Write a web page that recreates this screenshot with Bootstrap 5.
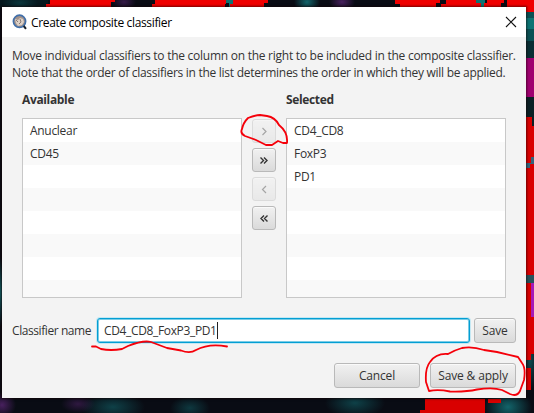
<!DOCTYPE html>
<html lang="en">
<head>
<meta charset="utf-8">
<title>Create composite classifier</title>
<meta name="viewport" content="width=device-width, initial-scale=1">
<link href="https://cdn.jsdelivr.net/npm/bootstrap@5.3.0/dist/css/bootstrap.min.css" rel="stylesheet">
<style>
  body { width: 534px; height: 413px; background: #090c14; font: 12px/17px "Open Sans", "Noto Sans", sans-serif; color: #333; }
  .backdrop-art, .annotations { left: 0; top: 0; }
  .annotations { pointer-events: none; z-index: 3; }
  .dialog-window { width: 524px; height: 391px; margin: 7px 0 0 2px; background: #f3f3f3; z-index: 1; box-shadow: 0 0 2px 1px rgba(20,0,0,.55); }
  .title-strip { height: 30px; padding: 0 9px 0 8px; color: #000; }
  .title-text { margin-left: 4px; letter-spacing: -.35px; }
  .intro { padding: 10px 0 0 10px; white-space: nowrap; }
  .intro-a { letter-spacing: -.26px; }
  .intro-b { letter-spacing: -.28px; }
  .lists { padding: 10px 20px 0; }
  .list-col { width: 220px; }
  .list-heading { height: 19px; font-weight: 700; letter-spacing: -.35px; margin-bottom: 8px; }
  .pick-list { height: 180px; border: 1px solid #c8c8c8; overflow: hidden; background: repeating-linear-gradient(#fff 0 23px, #f9f9f9 23px 46px); }
  .pick-list .list-group-item { height: 23px; padding: 3px 7px; background: none; color: #333; line-height: 17px; letter-spacing: -.3px; }
  .movers { width: 44px; padding-top: 28px; gap: 5px; }
  .fx-btn { --bs-btn-padding-x: 0; --bs-btn-padding-y: 0; --bs-btn-font-size: 12px; --bs-btn-line-height: 17px; --bs-btn-color: #333; --bs-btn-border-radius: 3px; --bs-btn-border-color: #b9b9b9; --bs-btn-disabled-color: #333; --bs-btn-disabled-border-color: #b9b9b9; --bs-btn-disabled-opacity: .4; height: 25px; background: linear-gradient(#f1f1f1, #dadada); box-shadow: inset 0 1px #fafafa; letter-spacing: -.15px; }
  .mover { width: 24px; height: 24px; }
  .name-row { padding: 20px 10px 0; }
  .name-label { width: 85px; letter-spacing: -.42px; white-space: nowrap; }
  .name-input { width: 373px; height: 25px; padding: 0 6px; border: 1px solid #039ed3; border-radius: 3px; font-size: 12px; color: #333; letter-spacing: -.35px; box-shadow: 0 0 0 1px #c5e8f3, inset 0 0 0 1px #7accE6; }
  .caret { width: 1px; height: 17px; background: #222; }
  .actions { padding: 20px 10px 0; gap: 10px; }
  .wide-btn { width: 86px; }
</style>
</head>
<body class="position-relative overflow-hidden m-0">
<svg class="backdrop-art position-absolute" width="534" height="413" viewBox="0 0 534 413" aria-hidden="true" shape-rendering="crispEdges">
  <defs>
    <radialGradient id="teal"><stop stop-color="#12646a"/><stop offset="1" stop-color="#12646a" stop-opacity="0"/></radialGradient>
    <radialGradient id="violet"><stop stop-color="#48205e"/><stop offset="1" stop-color="#48205e" stop-opacity="0"/></radialGradient>
  </defs>
  <path fill="#06181e" d="M0 0h48v8H0z"/>
  <g fill="url(#teal)">
    <ellipse cx="307" cy="2" rx="13" ry="12"/><ellipse cx="20" cy="3" rx="18" ry="8" opacity=".4"/>
    <ellipse cx="0" cy="292" rx="5" ry="35"/>
    <ellipse cx="113" cy="407" rx="32" ry="15" opacity=".6"/><ellipse cx="190" cy="408" rx="20" ry="12" opacity=".5"/>
    <ellipse cx="355" cy="403" rx="30" ry="15" opacity=".6"/><ellipse cx="508" cy="407" rx="24" ry="18"/>
    <ellipse cx="530" cy="360" rx="9" ry="30" opacity=".7"/>
  </g>
  <g fill="url(#violet)">
    <ellipse cx="124" cy="2" rx="12" ry="8" opacity=".7"/><ellipse cx="342" cy="2" rx="13" ry="9"/>
    <ellipse cx="2" cy="405" rx="14" ry="13"/><ellipse cx="78" cy="404" rx="17" ry="9" opacity=".6"/>
  </g>
  <path fill="#0c7372" d="M226 0h7v7h-4V3h-3zM476 0h9v7h-4V3h-5z"/>
  <path fill="#f00000" d="M50 0h65v2h-4v5H46V4h4zM155 0h71v4h-1v3h-73V4h3zM233 0h35v3h-4v4h-34V4h3zM395 0h45v3h-4v4h-36V4h-5zM446 0h30v3h5v4h-40V4h5zM487 0h17v3h-3v4h-17V3h3zM507 0h27v12h-8V7h-19z"/>
  <path fill="#0b5054" d="M526 12h8v46h-8z"/>
  <path fill="#0d7474" d="M526 18h8v11h-8z"/>
  <path fill="#092e34" d="M526 41h8v17h-8z"/>
  <path fill="#a00070" d="M526 58h8v39h-8z"/>
  <path fill="#0b2025" d="M526 97h8v29h-8z"/>
  <path fill="#d90000" d="M526 117h6v9h2v149h-8z"/>
  <path fill="#35647c" d="M526 163h5v-6h3v7h-4v4h-4z"/>
  <path fill="#26525a" d="M526 275h8v8h-8z"/>
  <path fill="#a719b7" d="M531 283h3v35h-3z"/>
  <path fill="#d90000" d="M526 283h5v34h3v37h-3v6h-5zM526 368h5v22h-5zM425 399h60v14h-65v-3h5zM488 399h13v4h-13z"/>
</svg>

<main class="dialog-window position-relative">
  <header class="title-strip d-flex align-items-center bg-white">
    <svg width="17" height="17" viewBox="0 0 17 17" aria-hidden="true"><circle cx="9.500" cy="7.300" r="6.100" fill="#a3938b" stroke="#416fa9" stroke-width="1.700"/><path d="M5 5l3 1 2-2 3 1 1 3-2 3-4 1-2-3z" fill="#dcd0c6"/><path d="M6 6l2 2M10 5l1 3-2 2" stroke="#887a76" fill="none"/><path d="M13.700 12l2.300 2.800" stroke="#17202b" stroke-width="2"/></svg>
    <span class="title-text">Create composite classifier</span>
    <svg class="ms-auto" width="12" height="12" viewBox="0 0 12 12" role="img" aria-label="Close"><path d="M1 1l10 10M11 1L1 11" stroke="#111" stroke-width="1.1"/></svg>
  </header>
  <div class="intro"><div><span class="intro-a">Move individual classifiers to the column on the right to be included in the composite classifier.</span></div><div><span class="intro-b">Note that the order of classifiers in the list determines the order in which they will be applied.</span></div></div>

  <section class="lists d-flex">
    <div class="list-col"><div class="list-heading">Available</div>
      <ul class="pick-list list-group list-group-flush rounded-0 mb-0"><li class="list-group-item border-0">Anuclear</li><li class="list-group-item border-0">CD45</li></ul></div>
    <div class="movers d-flex flex-column align-items-center">
      <button class="btn fx-btn mover d-flex align-items-center justify-content-center" disabled aria-label="Add"><svg width="10" height="10" fill="none" stroke="#333" stroke-width="1.2"><path d="M3.500 2L7 5.500 3.500 9"/></svg></button>
      <button class="btn fx-btn mover d-flex align-items-center justify-content-center" aria-label="Add all"><svg width="10" height="10" fill="none" stroke="#333" stroke-width="1.4"><path d="M1.500 2.500l3 3-3 3M5 2.500l3 3-3 3"/></svg></button>
      <button class="btn fx-btn mover d-flex align-items-center justify-content-center" disabled aria-label="Remove"><svg width="10" height="10" fill="none" stroke="#333" stroke-width="1.2"><path d="M7 2L3.500 5.500 7 9"/></svg></button>
      <button class="btn fx-btn mover d-flex align-items-center justify-content-center" aria-label="Remove all"><svg width="10" height="10" fill="none" stroke="#333" stroke-width="1.4"><path d="M5 2.500l-3 3 3 3M8.500 2.500l-3 3 3 3"/></svg></button>
    </div>
    <div class="list-col"><div class="list-heading">Selected</div>
      <ul class="pick-list list-group list-group-flush rounded-0 mb-0"><li class="list-group-item border-0">CD4_CD8</li><li class="list-group-item border-0">FoxP3</li><li class="list-group-item border-0">PD1</li></ul></div>
  </section>

  <section class="name-row d-flex align-items-center">
    <span class="name-label">Classifier name</span>
    <div class="name-input form-control d-flex align-items-center bg-white"><span>CD4_CD8_FoxP3_PD1</span><span class="caret"></span></div>
    <button class="btn fx-btn flex-fill ms-1">Save</button>
  </section>
  <footer class="actions d-flex justify-content-end">
    <button class="btn fx-btn wide-btn">Cancel</button>
    <button class="btn fx-btn wide-btn">Save &amp; apply</button>
  </footer>
</main>

<svg class="annotations position-absolute" width="534" height="413" viewBox="0 0 534 413" fill="none" stroke="#f5000a" stroke-width="1.8" stroke-linecap="round" stroke-linejoin="round" aria-hidden="true">
  <path d="M248 118C253 116 256 115 260 115L267 116C274 117 277 121 279 125C284 129 288 134 287 143H283L278 141L272 145H266L256 140L245 136C241 134 241 131 242 129C243 124 245 121 248 118Z"/>
  <path d="M92 346.500H96L101 349Q111 351 122 349L128 346Q143 340 151 342L167 348L181 350.500Q190 354 196 350Q209 343 227 346.500"/>
  <path d="M429 391Q438 389 450 391.500Q466 392 477 389.500Q493 387 502 390L510 394Q517 397 520 391L524 380Q526 368 522 363L518 357L497 352L484 350Q472 346 462 348Q455 350 448 354Q436 353 430 362Q425 368 426 382Z"/>
</svg>
<script src="https://cdn.jsdelivr.net/npm/bootstrap@5.3.0/dist/js/bootstrap.bundle.min.js"></script>
</body>
</html>
